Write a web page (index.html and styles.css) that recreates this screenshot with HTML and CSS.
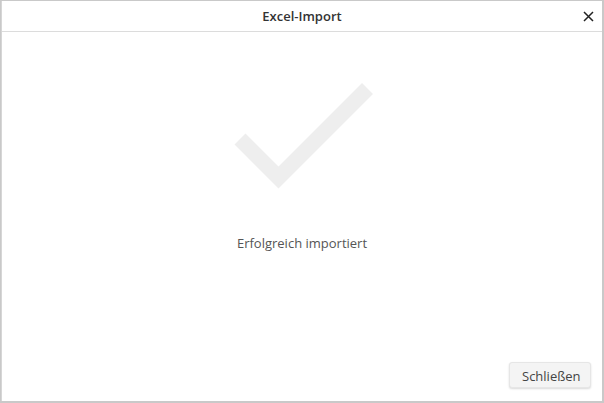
FILE: index.html
```html
<!DOCTYPE html>
<html lang="de">
<head>
    <meta charset="UTF-8">
    <meta name="viewport" content="width=device-width, initial-scale=1.0">
    <title>Excel-Import</title>
    <link rel="stylesheet" href="styles.css">
</head>
<body>
    <div class="dialog">
        <div class="dialog-header">
            <span class="dialog-title">Excel-Import</span>
            <span class="dialog-close">
                <svg width="11" height="11" viewBox="0 0 11 11"><path d="M1 1L10 10M10 1L1 10" stroke="#222" stroke-width="1.5" fill="none"/></svg>
            </span>
        </div>
        <div class="dialog-body">
            <svg class="check" width="160" height="120" viewBox="0 0 160 120">
                <path d="M7 58L45.5 96.5L134.5 7.5" stroke="#eeeeee" stroke-width="15.5" fill="none" stroke-linecap="butt" stroke-linejoin="miter"/>
            </svg>
            <p class="message">Erfolgreich importiert</p>
        </div>
        <div class="dialog-footer">
            <button class="btn">Schließen</button>
        </div>
    </div>
</body>
</html>
```

FILE: styles.css
```css
html, body {
    height: 100%;
}
body {
    margin: 0;
    padding: 1px 2px 2px 1px;
    box-sizing: border-box;
    background: #c9c9c9;
    font-family: "Open Sans", Arial, sans-serif;
    color: #333;
}
.dialog {
    height: 100%;
    background: #fff;
    border-left: 1px solid #d6d6d6;
    display: flex;
    flex-direction: column;
}
.dialog-header {
    height: 30px;
    border-bottom: 1px solid #dcdcdc;
    display: flex;
    align-items: center;
    justify-content: center;
    position: relative;
}
.dialog-title {
    font-size: 13px;
    font-weight: 600;
    color: #333;
}
.dialog-close {
    position: absolute;
    right: 8px;
    top: 10px;
    line-height: 0;
}
.dialog-body {
    flex: 1;
    display: flex;
    flex-direction: column;
    align-items: center;
}
.check {
    margin-top: 49px;
    margin-left: 22px;
}
.message {
    margin: 33px 0 0;
    font-size: 13px;
    color: #555;
}
.dialog-footer {
    display: flex;
    justify-content: flex-end;
    padding: 0 11px 13px;
}
.btn {
    font-family: "Open Sans", Arial, sans-serif;
    font-size: 13px;
    color: #444;
    background: #f4f4f4;
    border: 1px solid #e6e6e6;
    border-radius: 3px;
    box-shadow: 0 1px 2px rgba(0, 0, 0, 0.15);
    padding: 4px 12px 5px;
    height: 26px;
    width: 82px;
}
```
